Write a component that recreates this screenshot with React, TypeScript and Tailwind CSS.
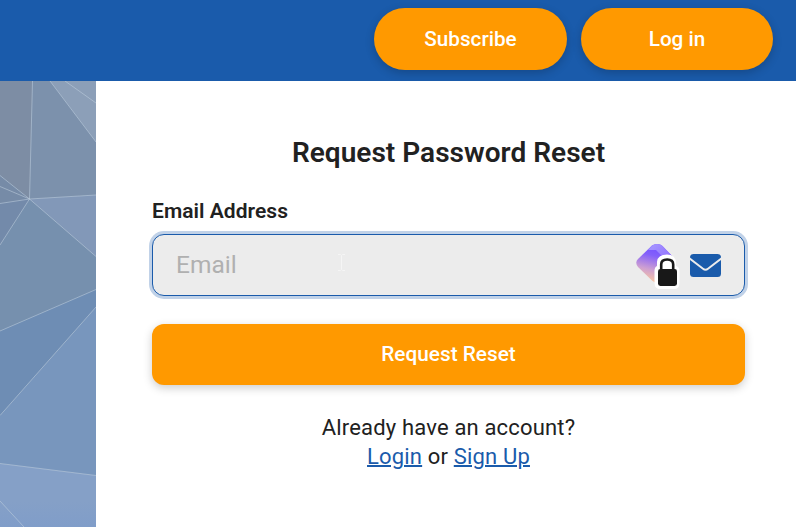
import React, { useState } from 'react';

function Backdrop() {
  return (
    <svg className="block h-full w-full" viewBox="0 0 96 446" preserveAspectRatio="none" aria-hidden="true">
      <defs>
        <linearGradient id="low" x1="0" y1="0" x2="0" y2="1">
          <stop offset="0" stopColor="#85a0c7" />
          <stop offset="0.6" stopColor="#85a0c7" />
          <stop offset="1" stopColor="#809dc9" />
        </linearGradient>
      </defs>
      <rect width="96" height="446" fill="#7690ae" />
      <path d="M0 0H32.5L29.5 118L0 94.5Z" fill="#7d8da4" />
      <path d="M0 94.5L29.5 118L0 122.5Z" fill="#768ba7" />
      <path d="M32.5 0H50L96 61V114L29.5 118Z" fill="#7c91ac" />
      <path d="M50 0H96V61Z" fill="#8c9fb8" />
      <path d="M29.5 118L96 114V175.5Z" fill="#8298b8" />
      <path d="M0 122.5L29.5 118L0 164Z" fill="#738aaa" />
      <path d="M0 250L96 208.5V226L0 334.5Z" fill="#6e8db4" />
      <path d="M0 334.5L96 226V394.5L0 382.5Z" fill="#7896bd" />
      <path d="M0 382.5L96 394.5V446H0Z" fill="url(#low)" />
      <g stroke="#c2d0df" strokeOpacity="0.6" strokeWidth="0.9" fill="none">
        <path d="M32.5 0L29.5 118L96 114M50 0L96 61M65 0L96 22" />
        <path d="M0 94.5L29.5 118L96 175.5M0 105.5L29.5 118L0 122.5M29.5 118L0 164" />
        <path d="M0 250L96 208.5M0 334.5L96 226M0 382.5L96 394.5M0 420L24 446" />
      </g>
    </svg>
  );
}

function VaultIcon() {
  return (
    <svg className="block" width="46" height="48" viewBox="0 0 46 48" aria-hidden="true">
      <defs>
        <linearGradient id="gem" x1="20" y1="8" x2="12" y2="42" gradientUnits="userSpaceOnUse">
          <stop offset="0" stopColor="#7855ff" />
          <stop offset="0.2" stopColor="#8460fa" />
          <stop offset="0.6" stopColor="#cd9fd2" />
          <stop offset="1" stopColor="#ffcb9a" />
        </linearGradient>
        <linearGradient id="facet" x1="20" y1="4" x2="36" y2="20" gradientUnits="userSpaceOnUse">
          <stop offset="0" stopColor="#a290ff" />
          <stop offset="1" stopColor="#8f6cff" />
        </linearGradient>
      </defs>
      <path d="M16 4.5Q18 3 21 3Q24.5 3 26.5 5L38 17L24 41Q20 43 16 39.5L2 26Q-1.5 21.5 2 18Z" fill="url(#gem)" />
      <path d="M12 9L16 4.5Q18 3 21 3Q24.5 3 26.5 5L36 15L30 19L20 9Z" fill="url(#facet)" />
      <path
        d="M21 21Q21.5 13.5 31 13.5Q40 13.5 40 22.5V25Q43.5 26 43.5 30V42Q43.5 48 38 48H24.5Q18.5 48 18.5 42V30Q18.5 26 21 25Z"
        fill="#fff"
      />
      <path d="M25.2 28V23.5Q25.2 18.5 31.2 18.5Q37.2 18.5 37.2 23.5V28" fill="none" stroke="#181818" strokeWidth="2.6" />
      <rect x="22" y="28" width="19" height="17" rx="2.4" fill="#181818" />
    </svg>
  );
}

function MailIcon() {
  return (
    <svg className="block" width="31" height="23" viewBox="0 0 31 23" aria-hidden="true">
      <rect width="31" height="23" rx="3.5" fill="#1a5bab" />
      <path d="M-1 4L13 14.7Q15.5 16.8 18 14.7L32 4" fill="none" stroke="#ececec" strokeWidth="1.9" />
    </svg>
  );
}

export default function App() {
  const [email, setEmail] = useState('');

  return (
    <div className="flex h-[527px] w-[796px] flex-col overflow-hidden bg-white font-['Roboto',sans-serif] text-[#212121]">
      <header className="flex h-[81px] shrink-0 justify-end gap-[14px] bg-[#1a5bab] pt-2 pr-[23px]">
        <button className="h-[62px] w-[193px] rounded-full bg-[#ff9900] pt-0.5 text-[20.7px] font-medium text-white shadow-[0_3px_10px_rgba(0,0,0,0.2)]">
          Subscribe
        </button>
        <button className="h-[62px] w-[192px] rounded-full bg-[#ff9900] pt-0.5 text-[20.7px] font-medium text-white shadow-[0_3px_10px_rgba(0,0,0,0.2)]">
          Log in
        </button>
      </header>

      <div className="flex min-h-0 flex-1">
        <aside className="w-24 shrink-0">
          <Backdrop />
        </aside>

        <main className="flex-1 pt-[54px] pr-[51px] pl-14">
          <h1 className="text-center text-[28px] leading-9 font-semibold tracking-[0.03px]">Request Password Reset</h1>

          <form onSubmit={(e) => e.preventDefault()}>
            <label htmlFor="email" className="mt-[26px] block text-[21px] leading-7 font-semibold tracking-[0.05px]">
              Email Address
            </label>
            <div className="mt-[9px] flex h-[62px] items-center rounded-xl border border-[#1a5bab] bg-[#ececec] pr-[23px] pl-[23px] shadow-[0_0_0_3px_#c1d2e8]">
              <input
                id="email"
                type="email"
                placeholder="Email"
                value={email}
                onChange={(e) => setEmail(e.target.value)}
                className="w-[161px] bg-transparent text-[24.5px] leading-8 outline-none placeholder:text-[#b0b0b0]"
              />
              <svg className="mb-1.5 block" width="9" height="17" viewBox="0 0 9 17" aria-hidden="true">
                <path d="M1 .5H3.5L4.5 1.5L5.5 .5H8M4.5 1.5V15.5M1 16.5H3.5L4.5 15.5L5.5 16.5H8" fill="none" stroke="#f5f5f5" />
              </svg>
              <div className="ml-auto flex items-center gap-2">
                <VaultIcon />
                <MailIcon />
              </div>
            </div>

            <button className="mt-7 block h-[61px] w-full rounded-xl bg-[#ff9900] text-[20.8px] font-medium text-white shadow-[0_3px_10px_rgba(0,0,0,0.2)]">
              Request Reset
            </button>
          </form>

          <p className="mt-7 text-center text-[22px] leading-[29px] tracking-[0.17px]">
            Already have an account?
            <br />
            <a href="#login" className="text-[#1a5bab] underline decoration-2">Login</a> or{' '}
            <a href="#signup" className="text-[#1a5bab] underline decoration-2">Sign Up</a>
          </p>
        </main>
      </div>
    </div>
  );
}
